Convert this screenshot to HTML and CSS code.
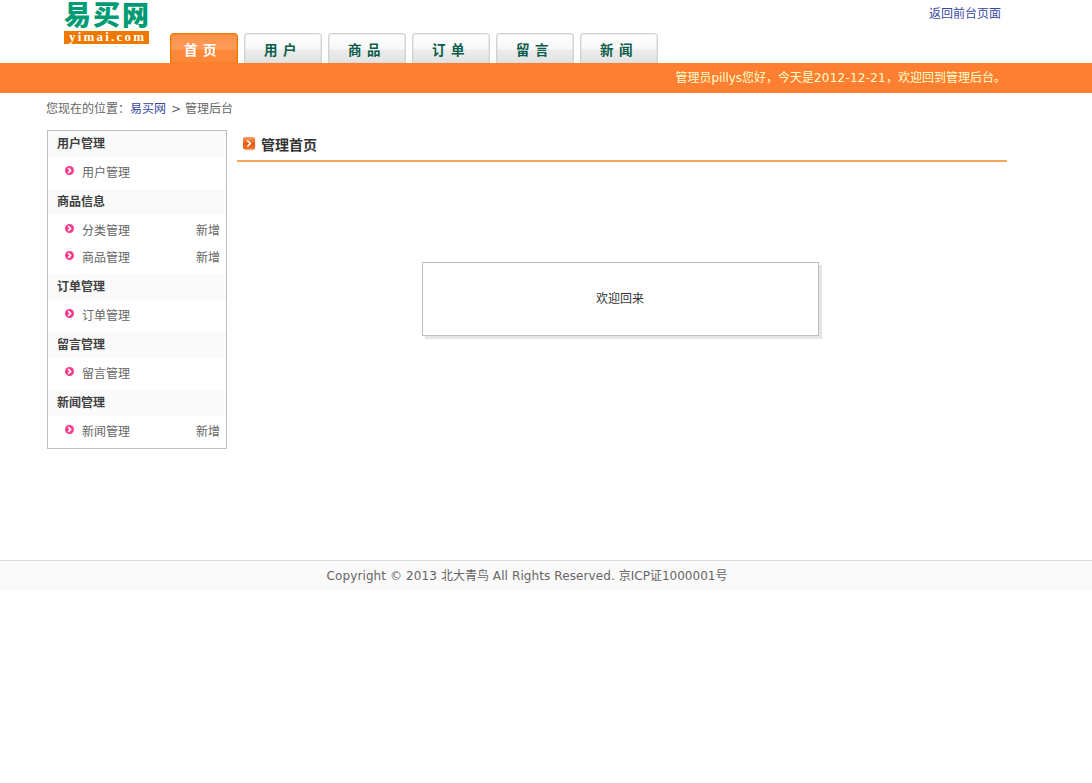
FILE: index.html
```html
<!DOCTYPE html>
<html lang="zh-CN">
<head>
<meta charset="utf-8">
<title>易买网 - 管理后台</title>
<link rel="stylesheet" href="styles.css">
</head>
<body>
<svg class="defs" width="0" height="0" aria-hidden="true">
  <symbol id="bullet" viewBox="0 0 9 9"><circle cx="4.5" cy="4.5" r="4.5" fill="#f83c8c"/><path d="M3.2 2.2 5.6 4.5 3.2 6.8" fill="none" stroke="#fff" stroke-width="1.6"/></symbol>
</svg>
<header class="header">
  <div class="wrap head-row">
    <svg class="logo" width="88" height="48" viewBox="0 0 88 48">
      <text class="logo-cn" x="1" y="25" textLength="85" lengthAdjust="spacing">易买网</text>
      <rect x="1" y="31" width="85" height="13" fill="#ee7800"/>
      <text class="logo-en" x="6" y="41" textLength="75" lengthAdjust="spacing">yimai.com</text>
    </svg>
    <nav class="tabs">
      <a class="tab current">首页</a>
      <a class="tab">用户</a>
      <a class="tab">商品</a>
      <a class="tab">订单</a>
      <a class="tab">留言</a>
      <a class="tab">新闻</a>
    </nav>
    <a class="back">返回前台页面</a>
  </div>
</header>
<div class="welcome-bar"><div class="wrap">管理员<span class="name">pillys</span>您好，今天是<span class="date">2012-12-21</span>，欢迎回到管理后台。</div></div>
<div class="wrap position">您现在的位置：<a class="link">易买网</a><span class="sep">&gt;</span>管理后台</div>
<div class="wrap columns">
  <aside class="menu">
    <h3>用户管理</h3>
    <ul><li><svg class="dot"><use href="#bullet"/></svg><a>用户管理</a></li></ul>
    <h3>商品信息</h3>
    <ul>
      <li><svg class="dot"><use href="#bullet"/></svg><a>分类管理</a><em>新增</em></li>
      <li><svg class="dot"><use href="#bullet"/></svg><a>商品管理</a><em>新增</em></li>
    </ul>
    <h3>订单管理</h3>
    <ul><li><svg class="dot"><use href="#bullet"/></svg><a>订单管理</a></li></ul>
    <h3>留言管理</h3>
    <ul><li><svg class="dot"><use href="#bullet"/></svg><a>留言管理</a></li></ul>
    <h3>新闻管理</h3>
    <ul><li><svg class="dot"><use href="#bullet"/></svg><a>新闻管理</a><em>新增</em></li></ul>
  </aside>
  <main class="main">
    <h2>
      <svg class="title-icon" width="13" height="14" viewBox="0 0 13 14">
        <defs><linearGradient id="og" x2="0" y2="1"><stop offset="0" stop-color="#f79a62"/><stop offset=".45" stop-color="#ee6a22"/><stop offset=".5" stop-color="#e4560a"/><stop offset="1" stop-color="#f47a30"/></linearGradient></defs>
        <rect x=".5" y="1.5" width="12" height="12" rx="2" fill="#ddd"/>
        <rect width="12" height="12.5" rx="2" fill="url(#og)"/>
        <path d="M4.3 3.5 7.3 6.5 4.3 9.5" fill="none" stroke="#fff" stroke-width="1.6"/>
      </svg>管理首页</h2>
    <div class="notice">欢迎回来</div>
  </main>
</div>
<footer class="footer"><div class="wrap"><span class="copy">Copyright © 2013 </span>北大青鸟<span class="rights"> All Rights Reserved. </span>京ICP证1000001号</div></footer>
</body>
</html>
```
FILE: styles.css
```css
* { box-sizing: border-box; }
body {
  margin: 0;
  background: #fff;
  color: #666;
  font: 12px/18px "DejaVu Sans", "Noto Sans CJK SC", sans-serif;
}
h2, h3, ul { margin: 0; padding: 0; list-style: none; }
.defs { display: block; height: 0; }
.wrap { width: 960px; margin-left: 47px; }
.head-row { display: flex; height: 63px; padding: 0 5px 0 16px; }
.logo { flex: none; overflow: visible; }
.logo-cn { font: 900 27px "Noto Sans CJK SC", sans-serif; fill: #009b73; }
.logo-en { font: bold 13px "Liberation Serif", serif; fill: #fff; }
.tabs { display: flex; align-items: flex-end; gap: 6px; margin-left: 19px; }
.tab {
  width: 78px;
  height: 30px;
  padding-left: 19px;
  border: 1px solid #d2d2d2;
  border-bottom: 0;
  border-radius: 4px 4px 0 0;
  background: linear-gradient(#fff 0, #f7f7f7 15px, #ececec 16px, #e2e2e2 100%);
  box-shadow: inset 0 0 0 1px rgba(210, 210, 210, .35);
  color: #095b4a;
  font: bold 13.5px/31px "Noto Sans CJK SC", sans-serif;
  letter-spacing: 5.5px;
  white-space: nowrap;
}
.tab.current {
  width: 68px;
  padding-left: 13px;
  border-color: #ee7800;
  background: linear-gradient(#ff9148 0, #ff9c5c 15px, #ff8a3c 16px, #ff8637 100%);
  box-shadow: inset 0 0 0 1px rgba(238, 120, 0, .35);
  color: #fff;
}
.back { margin-left: auto; padding: 5px 1px 0 0; color: #3648a0; }
.welcome-bar { height: 30px; background: #ff7f32; color: #ffc; line-height: 30px; text-align: right; white-space: nowrap; }
.welcome-bar .wrap { padding-right: 1px; }
.name { letter-spacing: -.1px; }
.date { letter-spacing: .23px; }
.position { height: 37px; margin-left: 46px; line-height: 32px; }
.link { color: #3648a0; }
.sep { margin: 0 4px 0 5px; }
.columns { display: flex; height: 430px; gap: 10px; }
.menu { width: 180px; height: 319px; border: 1px solid #bfbfbf; }
.menu h3 { height: 26px; padding-left: 9px; background: #fafafa; color: #404040; font-size: 12px; line-height: 27px; }
.menu ul { padding: 2px 6px 3px 17px; }
.menu li { display: flex; height: 27px; line-height: 28px; }
.dot { width: 9px; height: 9px; margin: 7px 8px 0 0; }
.menu em { margin-left: auto; font-style: normal; }
.main { width: 770px; }
.main h2 {
  display: flex;
  height: 32px;
  padding-left: 6px;
  border-bottom: 2px solid #f9a45a;
  color: #333;
  font: bold 14px/29px "Noto Sans CJK SC", sans-serif;
}
.title-icon { margin: 7px 5px 0 0; }
.notice {
  width: 397px;
  height: 74px;
  margin: 100px auto 0 185px;
  padding-right: 1px;
  border: 1px solid #bfbfbf;
  box-shadow: 3px 3px 0 #e6e6e6;
  color: #333;
  line-height: 73px;
  text-align: center;
}
.footer { height: 31px; border-top: 1px solid #ddd; background: #fafafa; line-height: 30px; text-align: center; }
.copy, .rights { letter-spacing: .1px; }
```
